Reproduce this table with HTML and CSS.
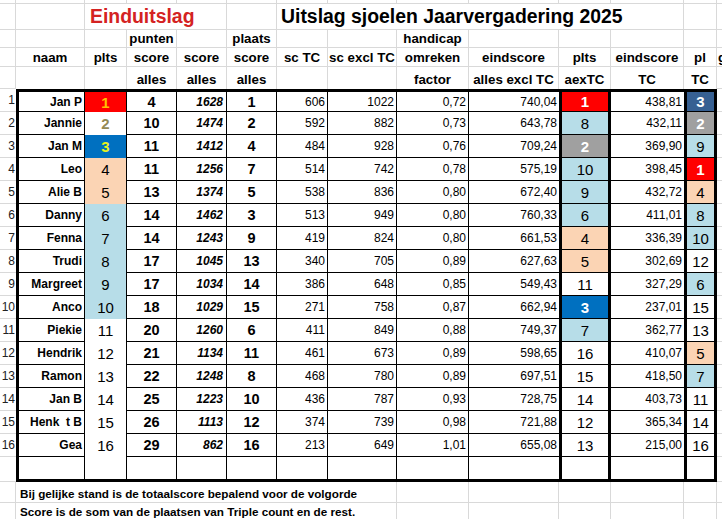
FILE: index.html
```html
<!DOCTYPE html>
<html lang="nl">
<head>
<meta charset="utf-8">
<title>Uitslag sjoelen Jaarvergadering 2025</title>
<link rel="stylesheet" href="styles.css">
</head>
<body>
<div class="sheet">
  <div class="row"><div class="c"></div><div class="c"></div><div class="c"></div><div class="c"></div><div class="c"></div><div class="c"></div><div class="c"></div><div class="c"></div><div class="c"></div><div class="c"></div><div class="c"></div><div class="c"></div><div class="c"></div><div class="c"></div></div>
  <div class="row"><div class="c"></div><div class="c"></div><div class="c title red-t span3">Einduitslag</div><div class="c"></div><div class="c title span6">Uitslag sjoelen Jaarvergadering 2025</div><div class="c"></div><div class="c"></div></div>
  <div class="row"><div class="c"></div><div class="c"></div><div class="c"></div><div class="c h">punten</div><div class="c"></div><div class="c h">plaats</div><div class="c"></div><div class="c"></div><div class="c h">handicap</div><div class="c"></div><div class="c"></div><div class="c"></div><div class="c"></div><div class="c"></div></div>
  <div class="row"><div class="c"></div><div class="c h">naam</div><div class="c h">plts</div><div class="c h">score</div><div class="c h">score</div><div class="c h">score</div><div class="c h">sc TC</div><div class="c h">sc excl TC</div><div class="c h">omreken</div><div class="c h">eindscore</div><div class="c h">plts</div><div class="c h">eindscore</div><div class="c h">pl</div><div class="c h hl">g</div></div>
  <div class="row"><div class="c"></div><div class="c nb"></div><div class="c nb"></div><div class="c nb h hb">alles</div><div class="c nb h hb">alles</div><div class="c nb h hb">alles</div><div class="c nb"></div><div class="c nb"></div><div class="c nb h hb">factor</div><div class="c nb h hb">alles excl TC</div><div class="c nb h hb">aexTC</div><div class="c nb h hb">TC</div><div class="c nb h hb">TC</div><div class="c"></div></div>

  <div class="row first"><div class="c rn">1</div><div class="b nm">Jan P</div><div class="b pl red p1">1</div><div class="b pt">4</div><div class="b sa">1628</div><div class="b ps">1</div><div class="b r">606</div><div class="b r">1022</div><div class="b r">0,72</div><div class="b r er">740,04</div><div class="b ax red w">1</div><div class="b r et">438,81</div><div class="b pc navy w">3</div><div class="c"></div></div>
  <div class="row"><div class="c rn">2</div><div class="b nm">Jannie</div><div class="b pl p2">2</div><div class="b pt">10</div><div class="b sa">1474</div><div class="b ps">2</div><div class="b r">592</div><div class="b r">882</div><div class="b r">0,73</div><div class="b r er">643,78</div><div class="b ax lblue">8</div><div class="b r et">432,11</div><div class="b pc gray w">2</div><div class="c"></div></div>
  <div class="row"><div class="c rn">3</div><div class="b nm">Jan M</div><div class="b pl blue p3">3</div><div class="b pt">11</div><div class="b sa">1412</div><div class="b ps">4</div><div class="b r">484</div><div class="b r">928</div><div class="b r">0,76</div><div class="b r er">709,24</div><div class="b ax gray w">2</div><div class="b r et">369,90</div><div class="b pc lblue">9</div><div class="c"></div></div>
  <div class="row"><div class="c rn">4</div><div class="b nm">Leo</div><div class="b pl peach">4</div><div class="b pt">11</div><div class="b sa">1256</div><div class="b ps">7</div><div class="b r">514</div><div class="b r">742</div><div class="b r">0,78</div><div class="b r er">575,19</div><div class="b ax lblue">10</div><div class="b r et">398,45</div><div class="b pc red w">1</div><div class="c"></div></div>
  <div class="row"><div class="c rn">5</div><div class="b nm">Alie B</div><div class="b pl peach">5</div><div class="b pt">13</div><div class="b sa">1374</div><div class="b ps">5</div><div class="b r">538</div><div class="b r">836</div><div class="b r">0,80</div><div class="b r er">672,40</div><div class="b ax lblue">9</div><div class="b r et">432,72</div><div class="b pc peach">4</div><div class="c"></div></div>
  <div class="row"><div class="c rn">6</div><div class="b nm">Danny</div><div class="b pl lblue">6</div><div class="b pt">14</div><div class="b sa">1462</div><div class="b ps">3</div><div class="b r">513</div><div class="b r">949</div><div class="b r">0,80</div><div class="b r er">760,33</div><div class="b ax lblue">6</div><div class="b r et">411,01</div><div class="b pc lblue">8</div><div class="c"></div></div>
  <div class="row"><div class="c rn">7</div><div class="b nm">Fenna</div><div class="b pl lblue">7</div><div class="b pt">14</div><div class="b sa">1243</div><div class="b ps">9</div><div class="b r">419</div><div class="b r">824</div><div class="b r">0,80</div><div class="b r er">661,53</div><div class="b ax peach">4</div><div class="b r et">336,39</div><div class="b pc lblue">10</div><div class="c"></div></div>
  <div class="row"><div class="c rn">8</div><div class="b nm">Trudi</div><div class="b pl lblue">8</div><div class="b pt">17</div><div class="b sa">1045</div><div class="b ps">13</div><div class="b r">340</div><div class="b r">705</div><div class="b r">0,89</div><div class="b r er">627,63</div><div class="b ax peach">5</div><div class="b r et">302,69</div><div class="b pc">12</div><div class="c"></div></div>
  <div class="row"><div class="c rn">9</div><div class="b nm">Margreet</div><div class="b pl lblue">9</div><div class="b pt">17</div><div class="b sa">1034</div><div class="b ps">14</div><div class="b r">386</div><div class="b r">648</div><div class="b r">0,85</div><div class="b r er">549,43</div><div class="b ax">11</div><div class="b r et">327,29</div><div class="b pc lblue">6</div><div class="c"></div></div>
  <div class="row"><div class="c rn">10</div><div class="b nm">Anco</div><div class="b pl lblue">10</div><div class="b pt">18</div><div class="b sa">1029</div><div class="b ps">15</div><div class="b r">271</div><div class="b r">758</div><div class="b r">0,87</div><div class="b r er">662,94</div><div class="b ax blue w">3</div><div class="b r et">237,01</div><div class="b pc">15</div><div class="c"></div></div>
  <div class="row"><div class="c rn">11</div><div class="b nm">Piekie</div><div class="b pl">11</div><div class="b pt">20</div><div class="b sa">1260</div><div class="b ps">6</div><div class="b r">411</div><div class="b r">849</div><div class="b r">0,88</div><div class="b r er">749,37</div><div class="b ax lblue">7</div><div class="b r et">362,77</div><div class="b pc">13</div><div class="c"></div></div>
  <div class="row"><div class="c rn">12</div><div class="b nm">Hendrik</div><div class="b pl">12</div><div class="b pt">21</div><div class="b sa">1134</div><div class="b ps">11</div><div class="b r">461</div><div class="b r">673</div><div class="b r">0,89</div><div class="b r er">598,65</div><div class="b ax">16</div><div class="b r et">410,07</div><div class="b pc peach">5</div><div class="c"></div></div>
  <div class="row"><div class="c rn">13</div><div class="b nm">Ramon</div><div class="b pl">13</div><div class="b pt">22</div><div class="b sa">1248</div><div class="b ps">8</div><div class="b r">468</div><div class="b r">780</div><div class="b r">0,89</div><div class="b r er">697,51</div><div class="b ax">15</div><div class="b r et">418,50</div><div class="b pc lblue">7</div><div class="c"></div></div>
  <div class="row"><div class="c rn">14</div><div class="b nm">Jan B</div><div class="b pl">14</div><div class="b pt">25</div><div class="b sa">1223</div><div class="b ps">10</div><div class="b r">436</div><div class="b r">787</div><div class="b r">0,93</div><div class="b r er">728,75</div><div class="b ax">14</div><div class="b r et">403,73</div><div class="b pc">11</div><div class="c"></div></div>
  <div class="row"><div class="c rn">15</div><div class="b nm">Henk&nbsp; t B</div><div class="b pl">15</div><div class="b pt">26</div><div class="b sa">1113</div><div class="b ps">12</div><div class="b r">374</div><div class="b r">739</div><div class="b r">0,98</div><div class="b r er">721,88</div><div class="b ax">12</div><div class="b r et">365,34</div><div class="b pc">14</div><div class="c"></div></div>
  <div class="row"><div class="c rn">16</div><div class="b nm">Gea</div><div class="b pl">16</div><div class="b pt">29</div><div class="b sa">862</div><div class="b ps">16</div><div class="b r">213</div><div class="b r">649</div><div class="b r">1,01</div><div class="b r er">655,08</div><div class="b ax">13</div><div class="b r et">215,00</div><div class="b pc">16</div><div class="c"></div></div>
  <div class="row last"><div class="c rn"></div><div class="b nm"></div><div class="b pl"></div><div class="b pt"></div><div class="b sa"></div><div class="b ps"></div><div class="b r"></div><div class="b r"></div><div class="b r"></div><div class="b r er"></div><div class="b ax"></div><div class="b r et"></div><div class="b pc"></div><div class="c"></div></div>

  <div class="row"><div class="c"></div><div class="c foot span7">Bij gelijke stand is de totaalscore bepalend voor de volgorde</div><div class="c"></div><div class="c"></div><div class="c"></div><div class="c"></div><div class="c"></div><div class="c"></div></div>
  <div class="row"><div class="c"></div><div class="c foot span7">Score is de som van de plaatsen van Triple count en de rest.</div><div class="c"></div><div class="c"></div><div class="c"></div><div class="c"></div><div class="c"></div><div class="c"></div></div>
</div>
</body>
</html>
```
FILE: styles.css
```css
* { box-sizing: border-box; }
html, body { margin: 0; padding: 0; overflow: hidden; background: #fff; }
body { font-family: "Liberation Sans", Arial, sans-serif; color: #000; }

.sheet {
  display: grid;
  grid-template-columns: 16px 69px 42px 50px 50px 50px 51px 69px 72px 90px 52px 73px 33px 40px;
  grid-template-rows: 4px 26px 18px 19px 22px repeat(16, 23px) 25px 21px 18px;
  width: 757px;
}
.row { display: contents; }
.row > div {
  display: flex;
  align-items: center;
  justify-content: center;
  padding: 0 2px;
  white-space: nowrap;
  min-width: 0;
  font-size: 12px;
}

/* gridline cell */
.c { border-right: 1px solid #d9d9d9; border-bottom: 1px solid #d9d9d9; }
.nb { border-bottom: 0; }

/* body cell */
.b { border-right: 1px solid #000; border-bottom: 1px solid #000; background: #fff; }
.first > .b { border-top: 3px solid #000; }
.nm { border-left: 3px solid #000; justify-content: flex-end !important; font-weight: bold; font-size: 12px; }
.pl { border-bottom: 0; }
.last > .b { border-bottom: 3px solid #000; }
.pt, .ps { font-weight: bold; font-size: 14.5px !important; }
.sa { justify-content: flex-end !important; font-weight: bold; font-style: italic; padding-right: 3px !important; }
.r { justify-content: flex-end !important; }
.er, .et { border-right: 0; }
.ax, .pc { border-left: 3px solid #000; border-right: 3px solid #000; font-size: 15px !important; }
.pl { font-size: 15px !important; }

.rn { justify-content: flex-end !important; border-right: 0; color: #222; padding-right: 1px !important; }

/* header */
.h { font-weight: bold; font-size: 13.3px !important; }
.hb { align-items: flex-end !important; padding-bottom: 2px !important; }
.hl { justify-content: flex-start !important; padding-left: 1px !important; }

.title {
  justify-content: flex-start !important;
  font-weight: bold;
  font-size: 19.4px !important;
  padding-left: 4px !important;
}
.span3 { grid-column: span 3; }
.span6 { grid-column: span 6; }
.span7 { grid-column: span 7; }
.red-t { color: #d42222; padding-left: 5px !important; }

.foot {
  justify-content: flex-start !important;
  align-items: flex-end !important;
  padding-bottom: 2px !important;
  font-weight: bold;
  font-size: 11.7px !important;
  padding-left: 4px !important;
}

/* fills */
.red { background: #ff0000; }
.peach { background: #fbd4b4; }
.lblue { background: #b7dde8; }
.blue { background: #0070c0; }
.gray { background: #a0a0a0; }
.navy { background: #376092; }

.w { color: #fff; font-weight: bold; }
.p1 { color: #ffc000; font-weight: bold; }
.p2 { color: #948a54; font-weight: bold; }
.p3 { color: #e8f21c; font-weight: bold; }
```
